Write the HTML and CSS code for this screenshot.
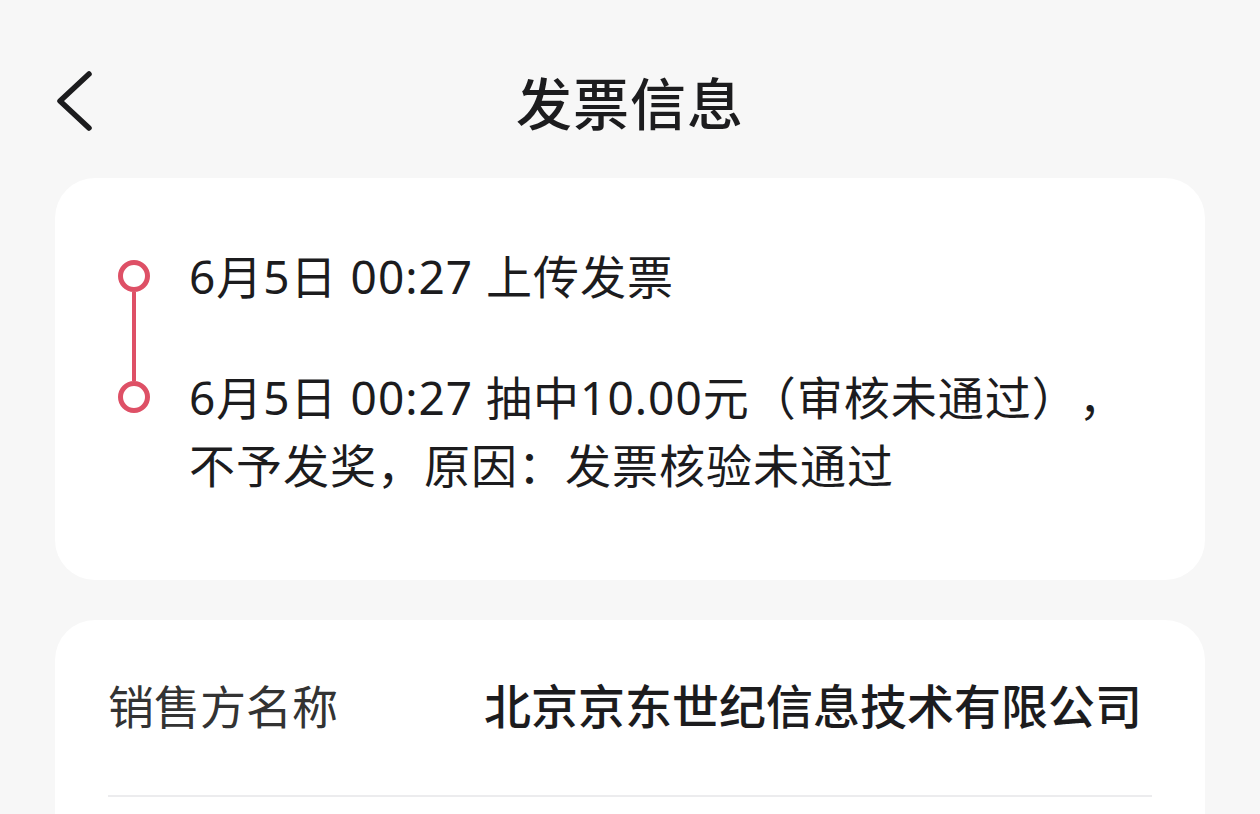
FILE: index.html
```html
<!DOCTYPE html>
<html lang="zh-CN">
<head>
  <meta charset="UTF-8" />
  <meta name="viewport" content="width=device-width, initial-scale=1.0"/>
  <title>发票信息</title>
  <link rel="stylesheet" href="styles.css">
</head>
<body>
  <div class="page">
    <div class="header">
      <a class="back-btn" href="#">
        <svg width="44" height="64" viewBox="0 0 44 64">
          <path d="M36 5 L7 32 L36 59" fill="none" stroke="#1c1c1e" stroke-width="5.5" stroke-linecap="round" stroke-linejoin="round"/>
        </svg>
      </a>
      <h1 class="title">发票信息</h1>
    </div>

    <div class="card timeline-card">
      <ul class="timeline">
        <li class="timeline-item">
          <div class="marker"><span class="dot"></span></div>
          <div class="timeline-text">6月5日 00:27 上传发票</div>
        </li>
        <li class="timeline-item">
          <div class="marker"><span class="dot"></span></div>
          <div class="timeline-text">6月5日 00:27 抽中10.00元（审核未通过），<br>不予发奖，原因：发票核验未通过</div>
        </li>
      </ul>
    </div>

    <div class="card info-card">
      <div class="info-row">
        <span class="info-label">销售方名称</span>
        <span class="info-value">北京京东世纪信息技术有限公司</span>
      </div>
    </div>
  </div>
</body>
</html>
```

FILE: styles.css
```css
* {
  box-sizing: border-box;
}

html, body {
  margin: 0;
  height: 100%;
}

body {
  font-family: "Noto Sans", "Noto Sans CJK SC", sans-serif;
  background: #f7f7f7;
  color: #1c1c1e;
  overflow: hidden;
  text-spacing-trim: space-all;
}

.page {
  padding: 0 55px;
}

.header {
  position: relative;
  height: 178px;
  padding-top: 60px;
}

.back-btn {
  position: absolute;
  left: -2px;
  top: 69px;
  display: block;
  line-height: 0;
}

.title {
  margin: 0;
  text-align: center;
  font-family: "Noto Sans CJK SC", sans-serif;
  font-size: 56px;
  font-weight: 500;
  line-height: 82px;
  letter-spacing: 1px;
}

.card {
  background: #fff;
  border-radius: 40px;
}

.timeline-card {
  padding: 64px 40px 81px 63px;
}

.timeline {
  list-style: none;
  margin: 0;
  padding: 0;
}

.timeline-item {
  display: flex;
  gap: 39px;
}

.timeline-item + .timeline-item {
  margin-top: 53px;
}

.marker {
  position: relative;
  width: 32px;
  flex-shrink: 0;
  padding-top: 18px;
}

.dot {
  display: block;
  width: 32px;
  height: 32px;
  border: 5px solid #de5066;
  border-radius: 50%;
}

.timeline-item:not(:last-child) .marker::after {
  content: "";
  position: absolute;
  left: 14px;
  top: 50px;
  width: 4px;
  height: 89px;
  background: #de5066;
}

.timeline-text {
  font-size: 46px;
  line-height: 68px;
  letter-spacing: 1px;
  color: #1c1c1e;
}

.info-card {
  margin-top: 40px;
  padding: 0 53px 200px;
}

.info-row {
  display: flex;
  align-items: center;
  justify-content: space-between;
  padding: 52px 0 55px;
  border-bottom: 2px solid #ececee;
  line-height: 68px;
  white-space: nowrap;
}

.info-label {
  font-size: 46px;
  color: #333;
}

.info-value {
  padding-right: 10px;
  font-size: 47px;
  font-weight: 500;
  color: #1c1c1e;
}
```
